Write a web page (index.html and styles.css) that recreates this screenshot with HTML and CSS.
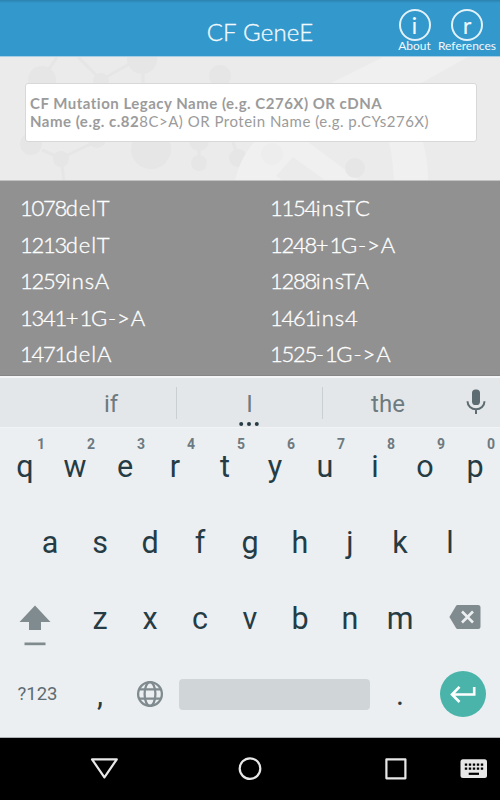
FILE: index.html
```html
<!DOCTYPE html>
<html lang="en">
<head>
    <meta charset="UTF-8">
    <meta name="viewport" content="width=device-width, initial-scale=1.0">
    <title>CF GeneE</title>
    <link rel="stylesheet" href="styles.css">
</head>
<body>
    <!-- Header -->
    <header class="header">
        <h1>CF GeneE</h1>
        <nav class="header-links">
            <a class="about"><span class="circle">i</span><span class="label">About</span></a>
            <a class="references"><span class="circle">r</span><span class="label">References</span></a>
        </nav>
    </header>

    <!-- Search -->
    <section class="search">
        <svg class="pattern" width="500" height="123" viewBox="0 57 500 123">
            <g fill="#e6e6e6">
                <path d="M42 80L57 57M78 57L101 80L140 58M143 65V84M42 150L61 158L97 141M61 158L64 181M199 142V160M233 142L238 158" fill="none" stroke="#e6e6e6" stroke-width="3"/>
                <circle cx="42" cy="80" r="14"/>
                <circle cx="101" cy="81" r="8"/>
                <circle cx="142" cy="59" r="15"/>
                <circle cx="220" cy="76" r="11"/>
                <circle cx="31" cy="144" r="11"/>
                <circle cx="61" cy="159" r="8"/>
                <circle cx="97" cy="139" r="9"/>
                <circle cx="151" cy="149" r="20"/>
                <circle cx="199" cy="141" r="10"/>
                <circle cx="199" cy="163" r="8"/>
                <circle cx="238" cy="158" r="9"/>
            </g>
            <g fill="#f0f0f0">
                <path d="M235 181Q239 160 254 142H308L360 181H326L293 157L276 176L283 181Z"/>
                <path d="M331 83L383 57H468L421 83Z"/>
                <path d="M389 142H423Q428 160 428 181H394Q393 160 389 142Z"/>
            </g>
            <circle cx="272" cy="154" r="11" fill="#ededed"/>
            <circle cx="355" cy="168" r="10" fill="#e6e6e6"/>
        </svg>
        <div class="search-box">
            <p><b>CF Mutation Legacy Name (e.g. C276X) OR cDNA</b></p>
            <p><b>Name (e.g. c.82</b>8C&gt;A) OR Protein Name (e.g. p.CYs276X)</p>
        </div>
    </section>

    <!-- Mutation list -->
    <section class="results">
        <span><i>1078</i>delT</span>
        <span><i>1154</i>insTC</span>
        <span><i>1213</i>delT</span>
        <span><i>1248</i>+<i>1</i>G-&gt;A</span>
        <span><i>1259</i>insA</span>
        <span><i>1288</i>insTA</span>
        <span><i>1341</i>+<i>1</i>G-&gt;A</span>
        <span><i>1461</i>ins<i>4</i></span>
        <span><i>1471</i>delA</span>
        <span><i>1525</i>-<i>1</i>G-&gt;A</span>
    </section>

    <!-- Keyboard -->
    <section class="keyboard">
        <div class="suggestions">
            <span class="word first">if</span>
            <span class="word active">I
                <svg class="dots" width="20" height="4" viewBox="0 0 20 4"><circle cx="2.2" cy="2" r="2"/><circle cx="10" cy="2" r="2"/><circle cx="17.8" cy="2" r="2"/></svg>
            </span>
            <span class="word last">the</span>
            <svg class="mic" width="20" height="26" viewBox="0 0 20 26">
                <rect x="6" y="0.5" width="8" height="15.5" rx="3.6" fill="#5d6c72"/>
                <path d="M1.5 12.3A8.5 8 0 0 0 18.5 12.3M10 20V25" fill="none" stroke="#5d6c72" stroke-width="2"/>
            </svg>
        </div>
        <div class="keys">
            <div class="row">
                <span class="key">q<sup>1</sup></span>
                <span class="key">w<sup>2</sup></span>
                <span class="key">e<sup>3</sup></span>
                <span class="key">r<sup>4</sup></span>
                <span class="key">t<sup>5</sup></span>
                <span class="key">y<sup>6</sup></span>
                <span class="key">u<sup>7</sup></span>
                <span class="key">i<sup>8</sup></span>
                <span class="key">o<sup>9</sup></span>
                <span class="key">p<sup>0</sup></span>
            </div>
            <div class="row">
                <span class="key">a</span>
                <span class="key">s</span>
                <span class="key">d</span>
                <span class="key">f</span>
                <span class="key">g</span>
                <span class="key">h</span>
                <span class="key">j</span>
                <span class="key">k</span>
                <span class="key">l</span>
            </div>
            <div class="row">
                <span class="key wide shift">
                    <svg width="32" height="42" viewBox="0 0 32 42" fill="#808b8f"><path d="M16 1.5L31.5 18H22V26H10V18H0.5Z"/><rect x="5.5" y="38.5" width="21" height="2.7"/></svg>
                </span>
                <span class="key">z</span>
                <span class="key">x</span>
                <span class="key">c</span>
                <span class="key">v</span>
                <span class="key">b</span>
                <span class="key">n</span>
                <span class="key">m</span>
                <span class="key wide backspace">
                    <svg width="32" height="24" viewBox="0 0 32 24"><path d="M8.5 0H29Q31.5 0 31.5 2.5V21.5Q31.5 24 29 24H8.5Q7.5 24 7 23L0.4 12L7 1Q7.5 0 8.5 0Z" fill="#808b8f"/><path d="M13 6.5L24 17.5M24 6.5L13 17.5" stroke="#eceff1" stroke-width="2.6"/></svg>
                </span>
            </div>
            <div class="row">
                <span class="key wide symbols">?123</span>
                <span class="key">,</span>
                <span class="key">
                    <svg width="28" height="28" viewBox="0 0 28 28" fill="none" stroke="#808b8f" stroke-width="2.3"><circle cx="14" cy="14" r="11.9"/><ellipse cx="14" cy="14" rx="5.4" ry="11.9"/><path d="M3 9.4H25M3 18.6H25"/></svg>
                </span>
                <span class="key space"><span class="space-bar"></span></span>
                <span class="key">.</span>
                <span class="key wide return">
                    <span class="enter">
                        <svg width="26" height="18" viewBox="0 0 26 18" fill="none" stroke="#fff" stroke-width="2.6"><path d="M24.2 2V9.5H2.5M9.5 1.8L2 9.5L9.5 17"/></svg>
                    </span>
                </span>
            </div>
        </div>
    </section>

    <!-- Android navigation bar -->
    <footer class="navbar">
        <svg width="500" height="62" viewBox="0 0 500 62" fill="none" stroke="#e8e8e8" stroke-width="2.2" stroke-linejoin="round">
            <path d="M92 21.3H116.8L104.4 39.3Z"/>
            <circle cx="250" cy="30.6" r="10.3"/>
            <rect x="386.4" y="21.3" width="19" height="19"/>
            <rect x="460.5" y="21.3" width="26.5" height="18.7" rx="2.5" fill="#e8e8e8" stroke="none"/>
            <path d="M464.8 26.6H483.2M464.8 30.6H483.2" stroke="#000" stroke-width="2.2" stroke-dasharray="2.4 1.6"/>
            <path d="M468.7 35.8H479" stroke="#000"/>
        </svg>
    </footer>
</body>
</html>
```

FILE: styles.css
```css
* {
    box-sizing: border-box;
}
body {
    margin: 0;
    width: 500px;
    height: 800px;
    overflow: hidden;
    font-family: Lato, sans-serif;
    background-color: #000;
}
.header {
    position: relative;
    height: 57px;
    background: linear-gradient(#2b81ad, #3398cb 3px);
    border-bottom: 1px solid #a5cde3;
    color: #f2f9fd;
}
h1 {
    margin: 0;
    padding-left: 20px;
    text-align: center;
    font-size: 24px;
    font-weight: 300;
    line-height: 64px;
    letter-spacing: 0.2px;
    -webkit-text-stroke: 0.35px #f2f9fd;
}
.header-links {
    position: absolute;
    top: 9px;
    right: 4px;
    display: flex;
}
.header-links a {
    display: flex;
    flex-direction: column;
    align-items: center;
}
.about {
    width: 47px;
}
.references {
    width: 58px;
}
.circle {
    width: 32px;
    height: 32px;
    border: 2px solid #e3f1f9;
    border-radius: 50%;
    font-size: 24px;
    line-height: 27px;
    text-align: center;
}
.label {
    margin-top: -2px;
    font-size: 12px;
    line-height: 14px;
}
.search {
    position: relative;
    height: 124px;
    padding: 26px 23px 0 25px;
    background-color: #ebebeb;
    border-bottom: 1px solid #c2c2c2;
}
.pattern {
    position: absolute;
    top: 0;
    left: 0;
}
.search-box {
    position: relative;
    height: 59px;
    padding: 11px 4px;
    background-color: #fff;
    border: 1px solid #d8d8d8;
    border-radius: 3px;
    color: #9b9b9b;
    font-size: 15px;
    line-height: 17.5px;
    letter-spacing: 0.5px;
    white-space: nowrap;
}
.search-box p {
    margin: 0;
}
.results {
    display: grid;
    grid-template-columns: 250px 250px;
    grid-auto-rows: 36.5px;
    height: 195px;
    padding: 9px 0 0 20px;
    background-color: #919191;
    border-bottom: 1px solid #868686;
    color: #fff;
    font-size: 22px;
    font-weight: 300;
    line-height: 36px;
    letter-spacing: 0.9px;
    -webkit-text-stroke: 0.35px #fff;
}
.results i {
    font-style: normal;
    letter-spacing: -1.3px;
}
.keyboard {
    height: 362px;
    background-color: #eceff1;
    border-bottom: 1px solid #aeb2b4;
    font-family: Roboto, sans-serif;
    color: #263c45;
}
.suggestions {
    display: flex;
    align-items: center;
    height: 52px;
    background-color: #e4e7e9;
    border-top: 2px solid #f4f5f6;
    border-bottom: 1px solid #f1f3f4;
    color: #6d7a7f;
    font-size: 24px;
}
.word {
    height: 32px;
    line-height: 34px;
    text-align: center;
}
.word.first {
    width: 176px;
    padding-left: 46px;
}
.word.active {
    position: relative;
    width: 147px;
    border-left: 1px solid #cacfd1;
    border-right: 1px solid #cacfd1;
}
.word.last {
    width: 130px;
}
.dots {
    position: absolute;
    left: 62px;
    top: 35px;
    fill: #263c45;
}
.mic {
    margin: -1px 0 0 13px;
}
.row {
    display: flex;
    justify-content: center;
    height: 76px;
}
.key {
    position: relative;
    display: flex;
    align-items: center;
    justify-content: center;
    width: 50px;
    font-size: 30.5px;
}
.key.wide {
    width: 75px;
}
.key.shift {
    padding: 13px 5px 0 0;
}
.key.backspace {
    padding: 0 0 2px 4px;
}
.key.symbols {
    font-size: 18.5px;
    color: #5d6c72;
}
.key.return {
    padding-bottom: 1px;
}
.key sup {
    position: absolute;
    top: 8px;
    right: 5px;
    font-size: 14px;
    font-weight: 700;
    line-height: 16px;
    color: #6d7a7f;
}
.key.space {
    width: 200px;
    padding-right: 1px;
}
.space-bar {
    width: 191px;
    height: 31px;
    background-color: #d0d5d7;
    border-radius: 4px;
}
.enter {
    display: flex;
    align-items: center;
    justify-content: center;
    width: 46px;
    height: 46px;
    background-color: #4bb4aa;
    border-radius: 50%;
}
.navbar {
    height: 62px;
    background-color: #000;
}
```
